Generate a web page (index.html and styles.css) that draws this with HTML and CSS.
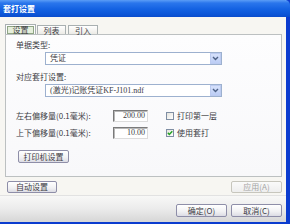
FILE: index.html
```html
<!DOCTYPE html>
<html>
<head>
<meta charset="utf-8">
<link rel="stylesheet" href="styles.css">
</head>
<body>
<div class="window">
  <div class="titlebar"><span class="title">套打设置</span></div>
  <div class="client">
    <div class="tabs">
      <div class="tab active"><span class="focus">设置</span></div>
      <div class="tab t2">列表</div>
      <div class="tab t3">引入</div>
    </div>
    <div class="panel">
      <div class="label l1">单据类型:</div>
      <div class="select s1">
        <span class="val">凭证</span>
        <span class="arrow"><svg width="7" height="5" viewBox="0 0 7 5"><path d="M1 1 L3.5 3.5 L6 1" fill="none" stroke="#4d6185" stroke-width="1.4"/></svg></span>
      </div>
      <div class="label l2">对应套打设置:</div>
      <div class="select s2">
        <span class="val">(激光)记账凭证KF-J101.ndf</span>
        <span class="arrow"><svg width="7" height="5" viewBox="0 0 7 5"><path d="M1 1 L3.5 3.5 L6 1" fill="none" stroke="#4d6185" stroke-width="1.4"/></svg></span>
      </div>
      <div class="row r1">
        <span class="rlabel">左右偏移量(0.1毫米):</span>
        <span class="input">200.00</span>
        <span class="check"></span>
        <span class="ctext">打印第一层</span>
      </div>
      <div class="row r2">
        <span class="rlabel">上下偏移量(0.1毫米):</span>
        <span class="input">10.00</span>
        <span class="check checked"><svg width="6" height="6" viewBox="0 0 6 6"><path d="M0.8 2.8 L2.3 4.4 L5.3 1.2" fill="none" stroke="#21a121" stroke-width="1.4"/></svg></span>
        <span class="ctext">使用套打</span>
      </div>
      <div class="btn printer">打印机设置</div>
    </div>
    <div class="actions">
      <div class="btn auto">自动设置</div>
      <div class="btn apply disabled">应用(A)</div>
    </div>
  </div>
  <div class="footer">
    <div class="btn fbtn">确定(O)</div>
    <div class="btn fbtn">取消(C)</div>
  </div>
</div>
</body>
</html>
```
FILE: styles.css
```css
html, body {
  margin: 0;
  padding: 0;
  background: #f6f5f1;
}
body {
  width: 290px;
  height: 224px;
  overflow: hidden;
  font-family: "Liberation Serif", "Noto Sans CJK SC", sans-serif;
  font-size: 8px;
  line-height: 10px;
  color: #3c3c44;
}
.window {
  width: 286px;
  height: 222px;
  border-right: 4px solid #0b3ccf;
  border-bottom: 2px solid #0b3ccf;
  display: flex;
  flex-direction: column;
  background: #f7f6f2;
}
.titlebar {
  height: 17px;
  flex: none;
  background: linear-gradient(#5b9df6 0px, #2a76ec 3px, #1462e2 9px, #0c56d8 14px, #0a4ccc 17px);
  display: flex;
  align-items: center;
  padding-left: 3px;
  border-top-right-radius: 5px;
  margin-right: -4px;
}
.title {
  color: #fff;
  font-weight: bold;
  font-size: 8px;
  font-family: "Noto Sans CJK SC", sans-serif;
}
.client {
  height: 178px;
  flex: none;
  padding: 0 4px 0 5px;
  display: flex;
  flex-direction: column;
}
.tabs {
  margin-top: 8px;
  display: flex;
  height: 9px;
  position: relative;
  z-index: 1;
}
.tab {
  height: 9px;
  border: 1px solid #a9b0b1;
  border-bottom: none;
  background: linear-gradient(#ffffff, #ecebe6);
  font-family: "Noto Sans CJK SC", sans-serif;
  font-size: 8px;
  line-height: 9px;
  text-align: center;
  box-sizing: border-box;
}
.tab.active {
  width: 31px;
  height: 10px;
  margin-top: -1px;
  background: #fcfcfe;
  padding: 1px 1px 0 1px;
}
.focus {
  display: block;
  height: 8px;
  border: 1px solid #8fa585;
  background: #e6efdc;
  box-sizing: border-box;
  line-height: 6px;
}
.tab.t2 {
  width: 29px;
  margin-left: 1px;
}
.tab.t3 {
  width: 30px;
  margin-left: 2px;
}
.panel {
  height: 143px;
  box-sizing: border-box;
  border: 1px solid #bcc0c1;
  background: linear-gradient(#fdfdfe, #f8f8fa);
  padding: 5px 0 0 10px;
  display: flex;
  flex-direction: column;
  align-items: flex-start;
}
.label {
  height: 10px;
  font-family: "Noto Sans CJK SC", sans-serif;
}
.l2 {
  margin-top: 7px;
}
.select {
  margin-top: 2px;
  margin-left: 29px;
  width: 177px;
  height: 13px;
  box-sizing: border-box;
  border: 1px solid #9db1cf;
  background: #fff;
  display: flex;
  align-items: center;
  justify-content: space-between;
  padding: 0 0 0 4px;
}
.val {
  line-height: 11px;
}
.arrow {
  width: 11px;
  height: 11px;
  box-sizing: border-box;
  border: 1px solid #bccbf0;
  background: linear-gradient(#d6e1fb, #bccdf5);
  display: flex;
  align-items: center;
  justify-content: center;
}
.row {
  display: flex;
  align-items: center;
  height: 12px;
}
.r1 {
  margin-top: 13px;
}
.r2 {
  margin-top: 5px;
}
.rlabel {
  width: 97px;
  font-family: "Noto Sans CJK SC", sans-serif;
}
.input {
  width: 35px;
  height: 12px;
  box-sizing: border-box;
  border: 1px solid;
  border-color: #7a7a7a #dcdcdc #dcdcdc #7a7a7a;
  box-shadow: inset 1px 1px 0 #b8b8b8;
  background: #fff;
  text-align: right;
  padding-right: 2px;
  line-height: 10px;
}
.check {
  margin-left: 18px;
  width: 8px;
  height: 8px;
  box-sizing: border-box;
  border: 1px solid #7f8ea3;
  background: linear-gradient(135deg, #e4e3dd, #ffffff);
  display: flex;
  align-items: center;
  justify-content: center;
}
.ctext {
  margin-left: 3px;
  font-family: "Noto Sans CJK SC", sans-serif;
}
.btn {
  box-sizing: border-box;
  border: 1px solid #8e8ea8;
  border-radius: 2px;
  background: linear-gradient(#ffffff, #f1f1f3 60%, #dcdce4);
  text-align: center;
  font-family: "Noto Sans CJK SC", sans-serif;
}
.printer {
  margin-top: 11px;
  margin-left: 2px;
  width: 51px;
  height: 13px;
  line-height: 11px;
}
.actions {
  margin-top: 4px;
  display: flex;
  justify-content: space-between;
  padding-left: 2px;
}
.actions .btn {
  height: 12px;
  line-height: 10px;
}
.auto {
  width: 50px;
}
.apply {
  width: 51px;
}
.disabled {
  color: #a5a5a5;
  border-color: #c7c6bd;
  background: linear-gradient(#fafafa, #eeeeee);
}
.footer {
  height: 27px;
  flex: none;
  box-sizing: border-box;
  border-top: 1px solid #e2e2e2;
  background: linear-gradient(#f8f8f7, #ebebeb 50%, #d6d6d6);
  display: flex;
  justify-content: flex-end;
  align-items: flex-start;
  padding: 8px 4px 0 0;
  gap: 4px;
}
.fbtn {
  width: 51px;
  height: 13px;
  line-height: 11px;
}
```
